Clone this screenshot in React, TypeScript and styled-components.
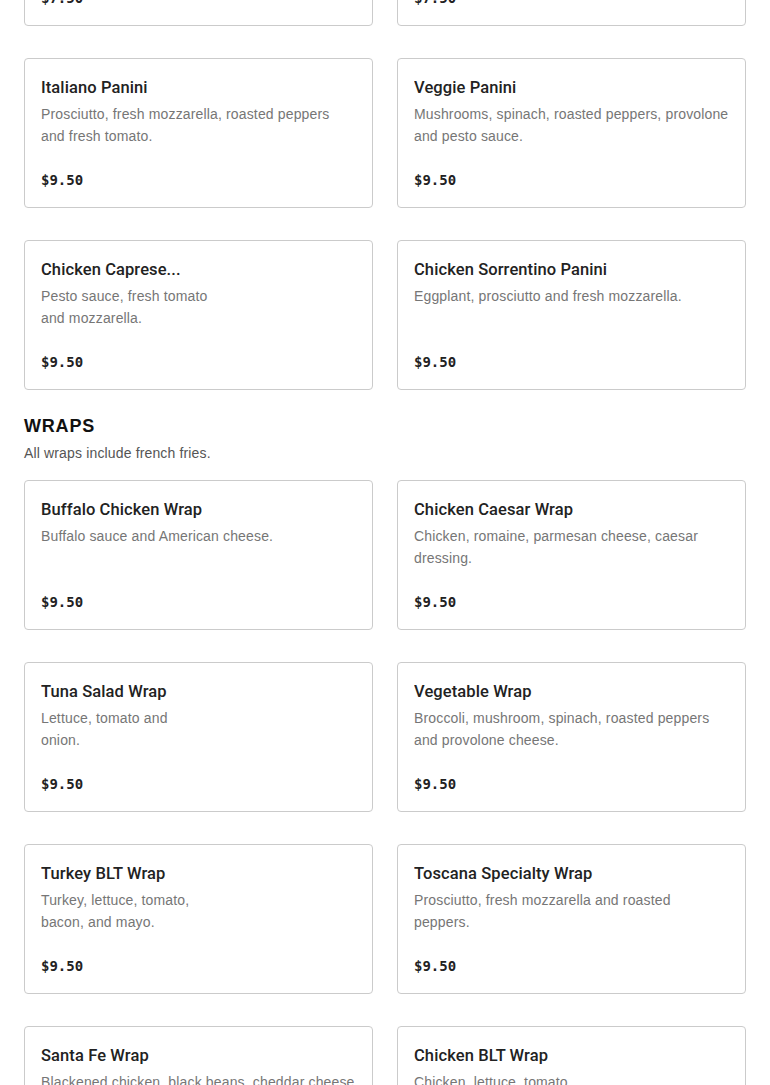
import React from 'react';
import styled, { createGlobalStyle } from 'styled-components';

type Item = { name: string; desc: React.ReactNode; price: string };

const GlobalStyle = createGlobalStyle`
  html, body {
    margin: 0;
    padding: 0;
    background: #ffffff;
    font-family: "Liberation Sans", Arial, sans-serif;
    color: #222222;
  }
`;

const panini: Item[] = [
  { name: 'Grilled Chicken Panini', desc: 'Grilled chicken, fresh mozzarella and pesto sauce.', price: '$7.50' },
  { name: 'Turkey Panini', desc: 'Turkey, provolone, lettuce and tomato.', price: '$7.50' },
  { name: 'Italiano Panini', desc: 'Prosciutto, fresh mozzarella, roasted peppers and fresh tomato.', price: '$9.50' },
  { name: 'Veggie Panini', desc: 'Mushrooms, spinach, roasted peppers, provolone and pesto sauce.', price: '$9.50' },
  { name: 'Chicken Caprese...', desc: <>Pesto sauce, fresh tomato<br />and mozzarella.</>, price: '$9.50' },
  { name: 'Chicken Sorrentino Panini', desc: 'Eggplant, prosciutto and fresh mozzarella.', price: '$9.50' },
];

const wraps: Item[] = [
  { name: 'Buffalo Chicken Wrap', desc: 'Buffalo sauce and American cheese.', price: '$9.50' },
  { name: 'Chicken Caesar Wrap', desc: 'Chicken, romaine, parmesan cheese, caesar dressing.', price: '$9.50' },
  { name: 'Tuna Salad Wrap', desc: <>Lettuce, tomato and<br />onion.</>, price: '$9.50' },
  { name: 'Vegetable Wrap', desc: 'Broccoli, mushroom, spinach, roasted peppers and provolone cheese.', price: '$9.50' },
  { name: 'Turkey BLT Wrap', desc: <>Turkey, lettuce, tomato,<br />bacon, and mayo.</>, price: '$9.50' },
  { name: 'Toscana Specialty Wrap', desc: 'Prosciutto, fresh mozzarella and roasted peppers.', price: '$9.50' },
  { name: 'Santa Fe Wrap', desc: 'Blackened chicken, black beans, cheddar cheese and salsa.', price: '$9.50' },
  { name: 'Chicken BLT Wrap', desc: <>Chicken, lettuce, tomato,<br />bacon, and mayo.</>, price: '$9.50' },
];

const Menu = styled.main`
  padding: 0 24px 40px;
  margin-top: -124px;
`;

const Section = styled.section`
  & + & {
    margin-top: 24px;
  }
`;

const SectionTitle = styled.h2`
  margin: 0;
  font-size: 18px;
  line-height: 24px;
  font-weight: 900;
  letter-spacing: 0.8px;
  color: #111111;
  text-transform: uppercase;
`;

const SectionNote = styled.p`
  margin: 4px 0 16px;
  font-size: 14px;
  line-height: 22px;
  letter-spacing: 0.15px;
  color: #555555;
`;

const Grid = styled.div`
  display: grid;
  grid-template-columns: 1fr 1fr;
  column-gap: 24px;
  row-gap: 32px;
`;

const Card = styled.article`
  box-sizing: border-box;
  height: 150px;
  display: flex;
  flex-direction: column;
  padding: 17px 16px 16px;
  border: 1px solid #cbcbcb;
  border-radius: 4px;
  background: #ffffff;
`;

const Name = styled.h3`
  margin: 0;
  font-family: Roboto, "Liberation Sans", Arial, sans-serif;
  font-size: 16.5px;
  line-height: 24px;
  font-weight: 500;
  letter-spacing: 0.1px;
  color: #222222;
  white-space: nowrap;
  overflow: hidden;
`;

const Desc = styled.p`
  margin: 3px 0 0;
  font-size: 14px;
  line-height: 22px;
  letter-spacing: 0.15px;
  color: #767676;
`;

const Price = styled.div`
  margin-top: auto;
  font-family: "DejaVu Sans Mono", "Liberation Mono", monospace;
  font-size: 14px;
  line-height: 22px;
  font-weight: 700;
  color: #222222;
`;

const MenuCard: React.FC<{ item: Item }> = ({ item }) => (
  <Card>
    <Name>{item.name}</Name>
    <Desc>{item.desc}</Desc>
    <Price>{item.price}</Price>
  </Card>
);

export default function App() {
  return (
    <>
      <GlobalStyle />
      <Menu>
        <Section>
          <Grid>
            {panini.map((item) => (
              <MenuCard key={item.name} item={item} />
            ))}
          </Grid>
        </Section>
        <Section>
          <SectionTitle>Wraps</SectionTitle>
          <SectionNote>All wraps include french fries.</SectionNote>
          <Grid>
            {wraps.map((item) => (
              <MenuCard key={item.name} item={item} />
            ))}
          </Grid>
        </Section>
      </Menu>
    </>
  );
}
